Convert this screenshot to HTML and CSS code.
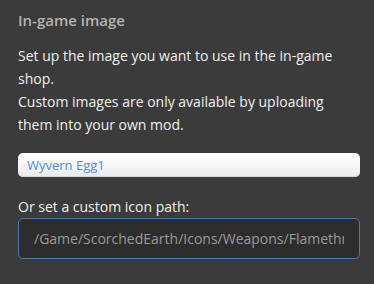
FILE: index.html
```html
<!DOCTYPE html>
<html lang="en">
<head>
    <meta charset="UTF-8">
    <title>In-game image</title>
    <link rel="stylesheet" href="styles.css">
</head>
<body>
    <div class="panel">
        <h2 class="title">In-game image</h2>
        <p class="desc">
            Set up the image you want to use in the in-game shop.<br>
            Custom images are only available by uploading them into your own mod.
        </p>

        <div class="picker">Wyvern Egg1</div>

        <label class="field-label" for="iconPath">Or set a custom icon path:</label>
        <input type="text" id="iconPath" class="path-input" placeholder="/Game/ScorchedEarth/Icons/Weapons/Flamethrower">
    </div>
</body>
</html>
```

FILE: styles.css
```css
body {
 margin: 0;
 background-color: #3b3b3b;
 font-family: "Open Sans", Arial, sans-serif;
}

.panel {
 padding: 10px 14px 0 18px;
}

.title {
 margin: 0;
 font-size: 15px;
 font-weight: 600;
 line-height: 20px;
 color: #b4b4b4;
}

.desc {
 margin: 14px 0 0;
 font-size: 14px;
 line-height: 23px;
 color: #f0f0f0;
}

.picker {
 margin-top: 17px;
 height: 24px;
 box-sizing: border-box;
 padding: 0 9px;
 border-radius: 5px;
 background: linear-gradient(#ffffff, #f6f6f6 50%, #ebebeb);
 box-shadow: inset 0 -1px 0 #d8d8d8;
 color: #4a8ee0;
 font-size: 13px;
 line-height: 24px;
}

.field-label {
 display: block;
 margin-top: 20px;
 font-size: 14px;
 line-height: 20px;
 color: #f0f0f0;
}

.path-input {
 display: block;
 width: 100%;
 height: 41px;
 margin-top: 1px;
 box-sizing: border-box;
 padding: 0 15px;
 border: 1px solid #4e76b8;
 border-radius: 5px;
 background-color: #2d2d2d;
 font-family: "Open Sans", Arial, sans-serif;
 font-size: 14px;
 color: #999;
 outline: none;
}

.path-input::placeholder {
 color: #9a9a9a;
}
```
